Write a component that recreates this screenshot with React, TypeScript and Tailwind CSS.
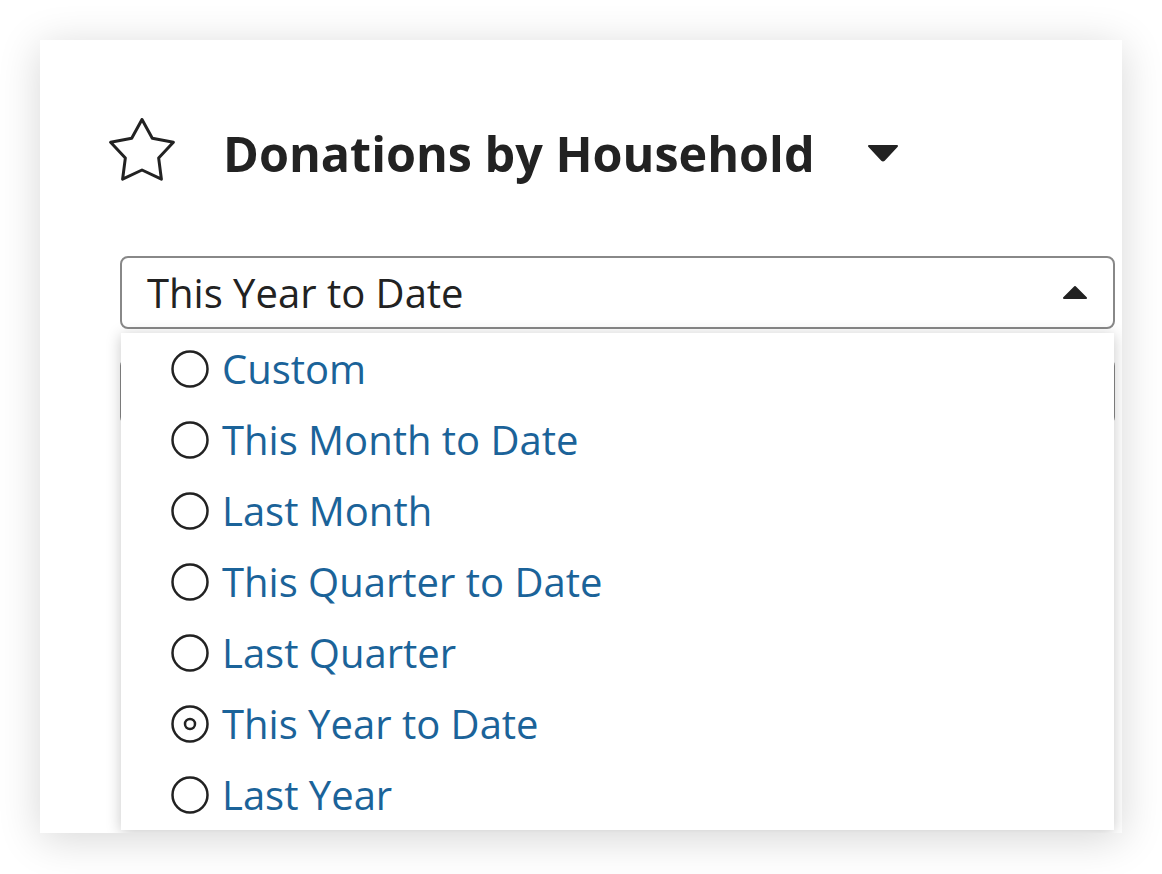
import React from "react";

const options = [
  "Custom",
  "This Month to Date",
  "Last Month",
  "This Quarter to Date",
  "Last Quarter",
  "This Year to Date",
  "Last Year",
];

const selected = "This Year to Date";

// five-pointed star with rounded joins
const starPoints = (() => {
  const cx = 35;
  const cy = 34.5;
  const outer = 33;
  const inner = 17.5;
  const pts: string[] = [];
  for (let i = 0; i < 10; i++) {
    const r = i % 2 === 0 ? outer : inner;
    const a = (Math.PI / 5) * i - Math.PI / 2;
    pts.push(`${(cx + r * Math.cos(a)).toFixed(2)},${(cy + r * Math.sin(a)).toFixed(2)}`);
  }
  return pts.join(" ");
})();

const Radio = ({ checked }: { checked: boolean }) => (
  <svg width="40" height="40" viewBox="0 0 40 40" className="shrink-0">
    <circle cx="20" cy="20" r="17.5" fill="none" stroke="#222" strokeWidth="2.5" />
    {checked && <circle cx="20" cy="20" r="5" fill="none" stroke="#222" strokeWidth="2.5" />}
  </svg>
);

export default function App() {
  return (
    <div className="min-h-[874px] bg-white pt-10 pl-10 font-['Open_Sans','Noto_Sans',sans-serif]">
      <div className="relative h-[793px] w-[1082px] overflow-hidden bg-white shadow-[0_6px_40px_rgba(0,0,0,0.16)]">
        <div className="flex h-[80px] items-center pl-[67px] mt-[73px]">
          <svg width="70" height="70" viewBox="0 0 70 70" className="shrink-0">
            <polygon
              points={starPoints}
              fill="none"
              stroke="#222"
              strokeWidth="3"
              strokeLinejoin="round"
            />
          </svg>
          <h1 className="ml-[46px] text-[48.5px] font-bold text-[#222]">
            Donations by Household
          </h1>
          <svg width="32" height="18" viewBox="0 0 32 18" className="ml-[52px] shrink-0">
            <path d="M2 2 L30 2 L17 16 Q16 17 15 16 Z" fill="#222" stroke="#222" strokeWidth="2" strokeLinejoin="round" />
          </svg>
        </div>

        <div className="ml-[80px] mr-[7px] mt-[63px]">
          <div className="flex h-[73px] items-center justify-between rounded-lg border-2 border-[#888] bg-white pl-[25px] pr-[25px]">
            <span className="text-[40px] text-[#222]">This Year to Date</span>
            <svg width="26" height="15" viewBox="0 0 26 15">
              <path d="M2 13 L13 2 L24 13 Z" fill="#222" stroke="#222" strokeWidth="2" strokeLinejoin="round" />
            </svg>
          </div>

          <div className="relative mt-[29px]">
            <div className="h-[67px] rounded-lg border-2 border-[#888]" />
            <div className="absolute left-px top-[-25px] w-[993px] bg-white shadow-[0_2px_14px_rgba(0,0,0,0.22)]">
              {options.map((o) => (
                <div key={o} className="flex h-[71px] items-center pl-[49px]">
                  <Radio checked={o === selected} />
                  <span className="ml-[12px] text-[40px] text-[#1b6399]">{o}</span>
                </div>
              ))}
            </div>
          </div>
        </div>
      </div>
    </div>
  );
}
